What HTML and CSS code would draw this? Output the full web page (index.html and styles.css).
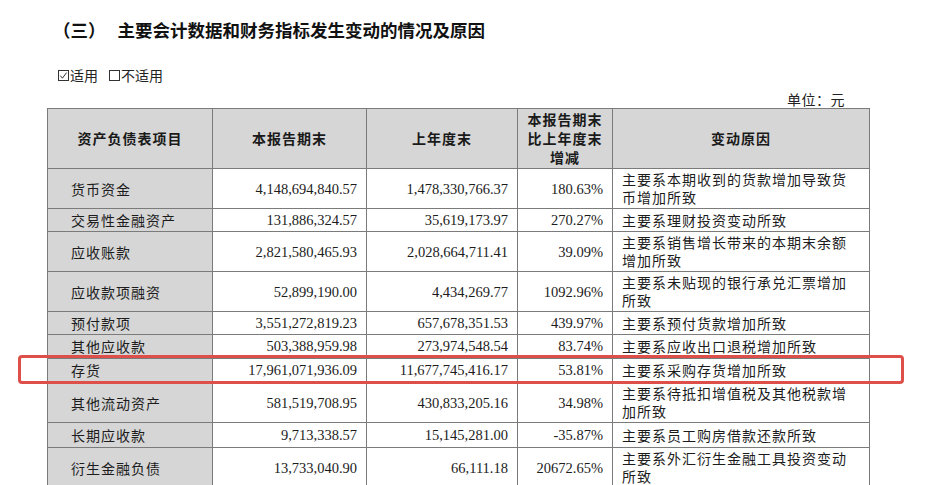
FILE: index.html
```html
<!DOCTYPE html>
<html lang="zh-CN">
<head>
<meta charset="utf-8">
<title>主要会计数据和财务指标发生变动的情况及原因</title>
<link rel="stylesheet" href="styles.css">
</head>
<body>
<div class="page">
  <h2 class="title"><span class="num">（三）</span>主要会计数据和财务指标发生变动的情况及原因</h2>
  <div class="applicable">
    <span class="opt"><svg class="box" width="11" height="11" viewBox="0 0 11 11"><rect x="0.5" y="0.5" width="10" height="10" fill="none" stroke="#333" stroke-width="1"/><path d="M2.3 5.6 L4.4 8.2 L8.6 2.6" fill="none" stroke="#333" stroke-width="1"/></svg>适用</span>
    <span class="opt"><svg class="box" width="11" height="11" viewBox="0 0 11 11"><rect x="0.5" y="0.5" width="10" height="10" fill="none" stroke="#333" stroke-width="1"/></svg>不适用</span>
  </div>
  <p class="unit">单位：元</p>
  <table class="data">
    <colgroup>
      <col class="c1"><col class="c2"><col class="c3"><col class="c4"><col class="c5">
    </colgroup>
    <thead>
      <tr>
        <th>资产负债表项目</th>
        <th>本报告期末</th>
        <th>上年度末</th>
        <th>本报告期末<br>比上年度末<br>增减</th>
        <th>变动原因</th>
      </tr>
    </thead>
    <tbody>
      <tr><td class="item">货币资金</td><td class="n">4,148,694,840.57</td><td class="n">1,478,330,766.37</td><td class="n">180.63%</td><td class="why">主要系本期收到的货款增加导致货币增加所致</td></tr>
      <tr><td class="item">交易性金融资产</td><td class="n">131,886,324.57</td><td class="n">35,619,173.97</td><td class="n">270.27%</td><td class="why">主要系理财投资变动所致</td></tr>
      <tr><td class="item">应收账款</td><td class="n">2,821,580,465.93</td><td class="n">2,028,664,711.41</td><td class="n">39.09%</td><td class="why">主要系销售增长带来的本期末余额增加所致</td></tr>
      <tr><td class="item">应收款项融资</td><td class="n">52,899,190.00</td><td class="n">4,434,269.77</td><td class="n">1092.96%</td><td class="why">主要系未贴现的银行承兑汇票增加所致</td></tr>
      <tr><td class="item">预付款项</td><td class="n">3,551,272,819.23</td><td class="n">657,678,351.53</td><td class="n">439.97%</td><td class="why">主要系预付货款增加所致</td></tr>
      <tr class="tall"><td class="item">其他应收款</td><td class="n">503,388,959.98</td><td class="n">273,974,548.54</td><td class="n">83.74%</td><td class="why">主要系应收出口退税增加所致</td></tr>
      <tr class="tall"><td class="item">存货</td><td class="n">17,961,071,936.09</td><td class="n">11,677,745,416.17</td><td class="n">53.81%</td><td class="why">主要系采购存货增加所致</td></tr>
      <tr><td class="item">其他流动资产</td><td class="n">581,519,708.95</td><td class="n">430,833,205.16</td><td class="n">34.98%</td><td class="why">主要系待抵扣增值税及其他税款增加所致</td></tr>
      <tr class="taller"><td class="item">长期应收款</td><td class="n">9,713,338.57</td><td class="n">15,145,281.00</td><td class="n">-35.87%</td><td class="why">主要系员工购房借款还款所致</td></tr>
      <tr><td class="item">衍生金融负债</td><td class="n">13,733,040.90</td><td class="n">66,111.18</td><td class="n">20672.65%</td><td class="why">主要系外汇衍生金融工具投资变动所致</td></tr>
    </tbody>
  </table>
  <div class="highlight"></div>
</div>
</body>
</html>
```

FILE: styles.css
```css
html, body {
  margin: 0;
  padding: 0;
  background: #ffffff;
}

body {
  color: #1c1c1c;
  font-family: "Noto Sans CJK SC", "Liberation Sans", sans-serif;
  overflow: hidden;
}

.page {
  position: relative;
  padding-top: 18px;
  height: 467px;
}

.title {
  margin: 0 0 0 53px;
  font-size: 17.5px;
  line-height: 24px;
  font-weight: 700;
  color: #111111;
}

.title .num {
  margin-right: 12px;
}

.applicable {
  display: flex;
  align-items: center;
  gap: 11px;
  height: 20px;
  margin: 23px 0 0 58px;
  font-size: 14px;
  line-height: 20px;
  color: #222222;
}

.applicable .opt {
  display: flex;
  align-items: center;
}

.applicable .box {
  display: block;
  margin-right: 1px;
}

.unit {
  margin: 5px 0 0 47px;
  width: 798px;
  height: 18px;
  text-align: right;
  font-size: 14px;
  line-height: 18px;
  letter-spacing: 0.5px;
  color: #222222;
}

.data {
  margin-left: 47px;
  width: 822px;
  border-collapse: collapse;
  table-layout: fixed;
  font-size: 14px;
}

.c1 { width: 165px; }
.c2 { width: 154px; }
.c3 { width: 151px; }
.c4 { width: 95px; }
.c5 { width: 257px; }

.data th,
.data td {
  border: 1px solid #7b7b7b;
  padding: 2px 9px;
  line-height: 18px;
  vertical-align: middle;
}

.data th {
  background: #d6d6d6;
  font-weight: 700;
  text-align: center;
  line-height: 19px;
  padding: 1px 4px;
  letter-spacing: 1px;
  color: #1a1a1a;
}

.data td.item {
  background: #d6d6d6;
  padding-left: 23px;
  letter-spacing: 1px;
  white-space: nowrap;
}

.data td.n {
  font-family: "Liberation Serif", "Noto Sans CJK SC", serif;
  font-size: 14.5px;
  text-align: right;
  white-space: nowrap;
}

.data td.why {
  padding: 1px 20px 2px 9px;
  letter-spacing: 1px;
}

.data tr.tall td {
  padding-top: 2px;
  padding-bottom: 3px;
}

.data tr.taller td {
  padding-top: 3px;
  padding-bottom: 3px;
}

.highlight {
  position: absolute;
  left: 18px;
  top: 355px;
  width: 880px;
  height: 23px;
  border: 3px solid #df4f4a;
  border-radius: 4px;
}
```
